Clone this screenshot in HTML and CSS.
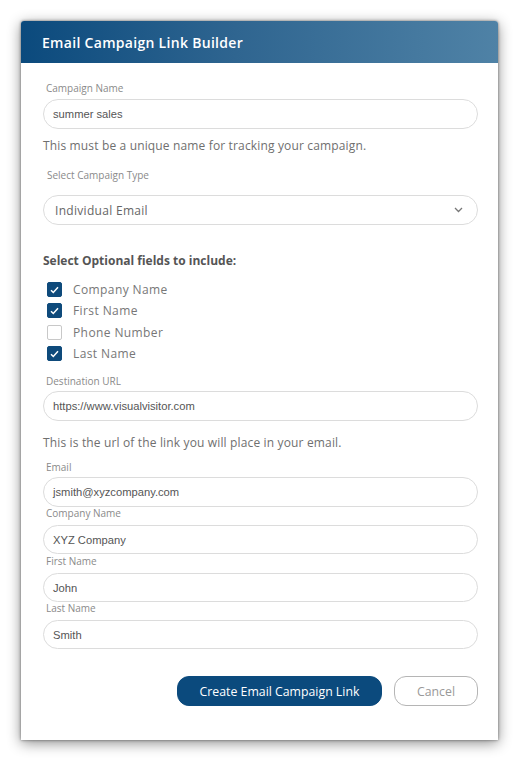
FILE: index.html
```html
<!DOCTYPE html>
<html>
<head>
<meta charset="utf-8">
<link rel="stylesheet" href="styles.css">
</head>
<body>
<div class="card">
  <div class="card-header">Email Campaign Link Builder</div>
  <div class="card-body">
    <div class="label first">Campaign Name</div>
    <div class="input">summer sales</div>
    <div class="help">This must be a unique name for tracking your campaign.</div>
    <div class="label type">Select Campaign Type</div>
    <div class="select">
      <span>Individual Email</span>
      <svg class="chev" width="9" height="6" viewBox="0 0 9 6"><path d="M1 1l3.5 3.5L8 1" fill="none" stroke="#777" stroke-width="1.3"/></svg>
    </div>
    <div class="section">Select Optional fields to include:</div>
    <div class="checks">
      <div class="check-row"><span class="box on"><svg width="9" height="8" viewBox="0 0 9 8"><path d="M1 4.2l2.3 2.3L8 1.3" fill="none" stroke="#fff" stroke-width="1.5"/></svg></span><span>Company Name</span></div>
      <div class="check-row"><span class="box on"><svg width="9" height="8" viewBox="0 0 9 8"><path d="M1 4.2l2.3 2.3L8 1.3" fill="none" stroke="#fff" stroke-width="1.5"/></svg></span><span>First Name</span></div>
      <div class="check-row"><span class="box"></span><span>Phone Number</span></div>
      <div class="check-row"><span class="box on"><svg width="9" height="8" viewBox="0 0 9 8"><path d="M1 4.2l2.3 2.3L8 1.3" fill="none" stroke="#fff" stroke-width="1.5"/></svg></span><span>Last Name</span></div>
    </div>
    <div class="label dest">Destination URL</div>
    <div class="input">https://www.visualvisitor.com</div>
    <div class="help second">This is the url of the link you will place in your email.</div>
    <div class="label email">Email</div>
    <div class="input">jsmith@xyzcompany.com</div>
    <div class="label tight">Company Name</div>
    <div class="input short">XYZ Company</div>
    <div class="label tight nudge">First Name</div>
    <div class="input short">John</div>
    <div class="label tight">Last Name</div>
    <div class="input short">Smith</div>
    <div class="actions">
      <button class="btn primary">Create Email Campaign Link</button>
      <button class="btn secondary">Cancel</button>
    </div>
  </div>
</div>
</body>
</html>
```
FILE: styles.css
```css
html, body {
  margin: 0;
  padding: 0;
  background: #ffffff;
}
body {
  padding: 21px 0 20px 21px;
  font-family: "Open Sans", "Liberation Sans", sans-serif;
}
.card {
  width: 477px;
  height: 719px;
  background: #fff;
  border-radius: 3px 3px 0 0;
  box-shadow: 0 0 3px rgba(0,0,0,0.5), 0 3px 14px rgba(0,0,0,0.45);
  overflow: hidden;
}
.card-header {
  height: 42px;
  display: flex;
  align-items: center;
  padding-left: 21px;
  background: linear-gradient(90deg, #0b4a7d 0%, #2f6590 45%, #4f82a6 100%);
  color: #fff;
  font-size: 14px;
  font-weight: 600;
  letter-spacing: 0.3px;
}
.card-body {
  padding: 0 20px 0 22px;
}
.label {
  font-size: 10px;
  line-height: 12px;
  height: 12px;
  color: #8a8a8a;
  padding-left: 3px;
  margin-bottom: 5px;
}
.label.first { margin-top: 19px; }
.label.type { margin-top: 15px; margin-bottom: 14px; padding-left: 4px; }
.label.dest { margin-top: 11px; margin-bottom: 4px; }
.label.email { margin-top: 10px; margin-bottom: 4px; }
.label.tight { margin-top: 0; margin-bottom: 6px; }
.label.nudge { margin-top: 1px; }
.input {
  box-sizing: border-box;
  height: 30px;
  border: 1px solid #dcdcdc;
  border-radius: 15px;
  display: flex;
  align-items: center;
  padding-left: 9px;
  font-family: "Liberation Sans", Arial, sans-serif;
  font-size: 11.2px;
  color: #555;
}
.input.short { height: 29px; }
.help {
  margin-top: 9px;
  font-size: 12px;
  letter-spacing: 0.15px;
  line-height: 16px;
  color: #6f6f6f;
}
.help.second { margin-top: 14px; }
.select {
  box-sizing: border-box;
  height: 30px;
  border: 1px solid #dcdcdc;
  border-radius: 15px;
  display: flex;
  align-items: center;
  justify-content: space-between;
  padding: 0 14px 0 11px;
  font-size: 12px;
  letter-spacing: 0.3px;
  color: #666;
}
.chev { display: block; }
.section {
  margin-top: 28px;
  font-size: 12px;
  line-height: 16px;
  font-weight: 700;
  color: #555;
}
.checks {
  margin-top: 10px;
  padding-left: 4px;
}
.check-row {
  height: 21.3px;
  display: flex;
  align-items: center;
  gap: 11px;
  font-size: 12px;
  letter-spacing: 0.4px;
  color: #777;
}
.box {
  box-sizing: border-box;
  width: 15px;
  height: 15px;
  border: 1px solid #c8c8c8;
  border-radius: 2px;
  display: flex;
  align-items: center;
  justify-content: center;
  background: #fff;
}
.box.on {
  background: #0e4a7b;
  border-color: #0e4a7b;
}
.box svg { display: block; }
.actions {
  margin-top: 27px;
  display: flex;
  justify-content: flex-end;
  gap: 12px;
}
.btn {
  box-sizing: border-box;
  height: 30px;
  border-radius: 12px;
  font-family: "Open Sans", "Liberation Sans", sans-serif;
  font-size: 12.3px;
  padding: 0;
  cursor: pointer;
}
.btn.primary {
  width: 205px;
  background: #0b4a7d;
  border: 1px solid #0b4a7d;
  color: #fff;
}
.btn.secondary {
  width: 84px;
  background: #fff;
  border: 1px solid #b5b5b5;
  color: #999;
}
```
